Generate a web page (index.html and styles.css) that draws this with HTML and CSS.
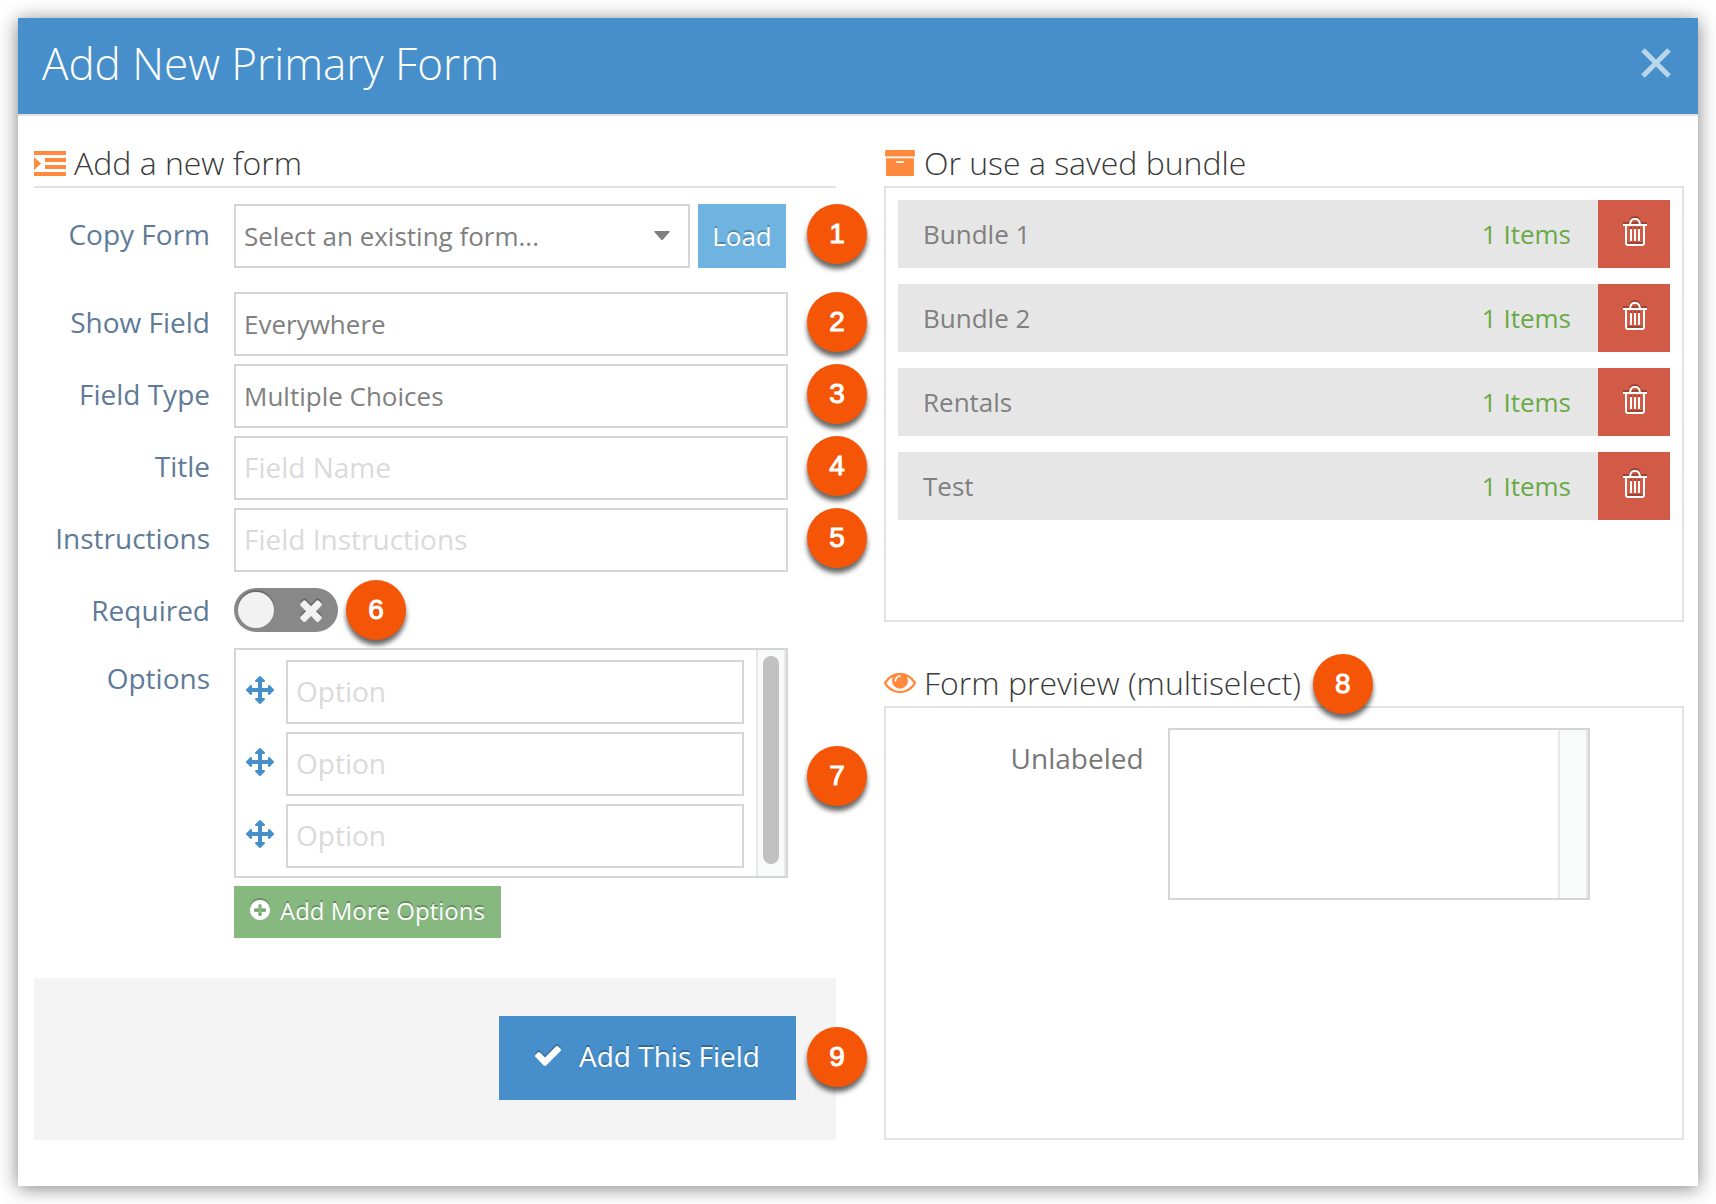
FILE: index.html
```html
<!DOCTYPE html>
<html lang="en">
<head>
	<meta charset="UTF-8">
	<title>Add New Primary Form</title>
	<link rel="stylesheet" href="styles.css">
</head>
<body>

	<!-- shared icons -->
	<svg class="sprite" aria-hidden="true">
		<symbol id="icon-move" viewBox="0 0 1792 1792">
			<path d="M1792 896q0 26-19 45l-256 256q-19 19-45 19t-45-19-19-45v-128h-384v384h128q26 0 45 19t19 45-19 45l-256 256q-19 19-45 19t-45-19l-256-256q-19-19-19-45t19-45 45-19h128v-384h-384v128q0 26-19 45t-45 19-45-19l-256-256q-19-19-19-45t19-45l256-256q19-19 45-19t45 19 19 45v128h384v-384h-128q-26 0-45-19t-19-45 19-45l256-256q19-19 45-19t45 19l256 256q19 19 19 45t-19 45-45 19h-128v384h384v-128q0-26 19-45t45-19 45 19l256 256q19 19 19 45z"/>
		</symbol>
		<symbol id="icon-trash" viewBox="0 0 26 30">
			<path fill="none" stroke="currentColor" stroke-width="2" d="M1 8h24M8 7l1-3q1-2 3-2h2q2 0 3 2l1 3M4 8v18q0 2 2 2h14q2 0 2-2V8M9 12v12M13 12v12M17 12v12"/>
		</symbol>
	</svg>

	<div class="modal" role="dialog" aria-labelledby="modal_title">
		<header class="modal-header">
			<h1 class="modal-title" id="modal_title">Add New Primary Form</h1>
			<button type="button" class="close" aria-label="Close">
				<svg viewBox="0 0 30 30"><path fill="none" stroke="currentColor" stroke-width="5" d="M2 2l26 26M28 2L2 28"/></svg>
			</button>
		</header>

		<div class="modal-body">

			<!-- new form -->
			<form class="new-form" action="">
				<h2 class="heading heading-line">
					<svg class="heading-icon" viewBox="0 0 32 26"><path d="M0 1h32v4H0zM11 8h21v4H11zM11 15h21v4H11zM0 22h32v4H0zM0 7l7 6.500l-7 6.500z"/></svg>
					<span>Add a new form</span>
				</h2>

				<div class="row row-copy">
					<label for="copy_form">Copy Form</label>
					<div class="field">
						<div class="select-wrap">
							<select id="copy_form" class="control">
								<option>Select an existing form...</option>
							</select>
							<svg class="caret" viewBox="0 0 16 10"><path d="M1 0h14q1 0 .7 1L9 8.500q-1 1-2 0L.3 1Q0 0 1 0z"/></svg>
						</div>
						<button type="button" class="btn btn-load">Load</button>
					</div>
					<span class="badge">1</span>
				</div>
				<div class="row">
					<label for="show_field">Show Field</label>
					<div class="field">
						<select id="show_field" class="control">
							<option>Everywhere</option>
						</select>
					</div>
					<span class="badge">2</span>
				</div>
				<div class="row">
					<label for="field_type">Field Type</label>
					<div class="field">
						<select id="field_type" class="control">
							<option>Multiple Choices</option>
						</select>
					</div>
					<span class="badge">3</span>
				</div>
				<div class="row">
					<label for="field_title">Title</label>
					<div class="field">
						<input type="text" id="field_title" class="control" placeholder="Field Name">
					</div>
					<span class="badge">4</span>
				</div>
				<div class="row">
					<label for="instructions">Instructions</label>
					<div class="field">
						<input type="text" id="instructions" class="control" placeholder="Field Instructions">
					</div>
					<span class="badge">5</span>
				</div>
				<div class="row row-required">
					<label for="required">Required</label>
					<div class="field">
						<span class="toggle">
							<input type="checkbox" id="required">
							<span class="knob"></span>
							<svg class="toggle-off" viewBox="300 236 1192 1320"><path d="M1490 1322q0 40-28 68l-136 136q-28 28-68 28t-68-28l-294-294-294 294q-28 28-68 28t-68-28l-136-136q-28-28-28-68t28-68l294-294-294-294q-28-28-28-68t28-68l136-136q28-28 68-28t68 28l294 294 294-294q28-28 68-28t68 28l136 136q28 28 28 68t-28 68l-294 294 294 294q28 28 28 68z"/></svg>
						</span>
						<span class="badge badge-inline">6</span>
					</div>
				</div>
				<div class="row row-options">
					<label for="option_1">Options</label>
					<div class="field">
						<div class="options">
							<ul class="option-list">
								<li>
									<svg class="move"><use href="#icon-move"/></svg>
									<input type="text" id="option_1" class="control" placeholder="Option">
								</li>
								<li>
									<svg class="move"><use href="#icon-move"/></svg>
									<input type="text" class="control" placeholder="Option" aria-label="Option 2">
								</li>
								<li>
									<svg class="move"><use href="#icon-move"/></svg>
									<input type="text" class="control" placeholder="Option" aria-label="Option 3">
								</li>
							</ul>
							<div class="track"><div class="thumb"></div></div>
						</div>
						<button type="button" class="btn btn-more">
							<svg viewBox="128 128 1536 1536"><path d="M1344 960v-128q0-26-19-45t-45-19h-256v-256q0-26-19-45t-45-19h-128q-26 0-45 19t-19 45v256h-256q-26 0-45 19t-19 45v128q0 26 19 45t45 19h256v256q0 26 19 45t45 19h128q26 0 45-19t19-45v-256h256q26 0 45-19t19-45zm320-64q0 209-103 385.500t-279.500 279.500-385.500 103-385.500-103-279.500-279.500-103-385.500 103-385.500 279.500-279.500 385.500-103 385.500 103 279.500 279.500 103 385.500z"/></svg>
							Add More Options
						</button>
					</div>
					<span class="badge">7</span>
				</div>

				<div class="actions">
					<button type="button" class="btn btn-add">
						<svg viewBox="121 344 1550 1178"><path d="M1671 566q0 40-28 68l-724 724-136 136q-28 28-68 28t-68-28l-136-136-362-362q-28-28-28-68t28-68l136-136q28-28 68-28t68 28l294 295 656-657q28-28 68-28t68 28l136 136q28 28 28 68z"/></svg>
						Add This Field
					</button>
					<span class="badge">9</span>
				</div>
			</form>

			<div class="side">
				<!-- saved bundles -->
				<section class="bundles">
					<h2 class="heading">
						<svg class="heading-icon" viewBox="0 0 32 28"><path d="M0 0h32v7H0zM1 9h30v19H1zM12 12v2h8v-2z" fill-rule="evenodd"/></svg>
						<span>Or use a saved bundle</span>
					</h2>
					<ul class="panel bundle-list">
						<li>
							<span class="bundle-name">Bundle 1</span>
							<span class="bundle-count">1 Items</span>
							<button type="button" class="btn-delete" aria-label="Delete Bundle 1"><svg><use href="#icon-trash"/></svg></button>
						</li>
						<li>
							<span class="bundle-name">Bundle 2</span>
							<span class="bundle-count">1 Items</span>
							<button type="button" class="btn-delete" aria-label="Delete Bundle 2"><svg><use href="#icon-trash"/></svg></button>
						</li>
						<li>
							<span class="bundle-name">Rentals</span>
							<span class="bundle-count">1 Items</span>
							<button type="button" class="btn-delete" aria-label="Delete Rentals"><svg><use href="#icon-trash"/></svg></button>
						</li>
						<li>
							<span class="bundle-name">Test</span>
							<span class="bundle-count">1 Items</span>
							<button type="button" class="btn-delete" aria-label="Delete Test"><svg><use href="#icon-trash"/></svg></button>
						</li>
					</ul>
				</section>

				<!-- preview -->
				<section class="preview">
					<h2 class="heading">
						<svg class="heading-icon" viewBox="0 256 1792 1408"><path d="M1664 960q-152-236-381-353 61 104 61 225 0 185-131.500 316.500t-316.500 131.500-316.500-131.500-131.500-316.500q0-121 61-225-229 117-381 353 133 205 333.500 326.500t434.500 121.500 434.500-121.500 333.500-326.500zm-720-384q0-20-14-34t-34-14q-125 0-214.500 89.500t-89.500 214.500q0 20 14 34t34 14 34-14 14-34q0-86 61-147t147-61q20 0 34-14t14-34zm848 384q0 34-20 69-140 230-376.500 368.500t-499.500 138.500-499.500-139-376.500-368q-20-35-20-69t20-69q140-229 376.500-368t499.500-139 499.500 139 376.500 368q20 35 20 69z"/></svg>
						<span class="heading-text">Form preview (multiselect)<span class="badge badge-heading">8</span></span>
					</h2>
					<div class="panel preview-panel">
						<label for="preview">Unlabeled</label>
						<div class="preview-box">
							<select id="preview" multiple></select>
							<div class="track"></div>
						</div>
					</div>
				</section>
			</div>

		</div>
	</div>

</body>
</html>
```
FILE: styles.css
```css
*{
	box-sizing: border-box;
}
body{
	margin: 0;
	padding: 18px;
	background-color: #fff;
	font-family: "Open Sans", sans-serif;
	font-size: 26px;
	color: #808080;
}
ul{
	list-style: none;
	margin: 0;
	padding: 0;
}
h1,h2{
	margin: 0;
	font-weight: 300;
}
input,select,button{
	font-family: inherit;
	font-size: inherit;
	color: inherit;
	border-radius: 0;
}
button{
	border: 0;
	cursor: pointer;
}
svg{
	display: block;
	flex: none;
	fill: currentColor;
}
.sprite{
	position: absolute;
	width: 0;
	height: 0;
}

/*modal*/
.modal{
	background-color: #fff;
	box-shadow: 0 2px 18px rgba(0,0,0,0.5);
}
.modal-header{
	display: flex;
	align-items: center;
	justify-content: space-between;
	height: 98px;
	padding: 0 27px 6px 24px;
	background-color: #478fca;
	border-bottom: 2px solid #e2e2e2;
}
.modal-title{
	font-size: 44px;
	line-height: 60px;
	color: #fff;
}
.close{
	padding: 0;
	background: none;
	color: #bad6ec;
}
.close svg{
	width: 30px;
	height: 30px;
}
.modal-body{
	display: grid;
	grid-template-columns: 802fr 800fr;
	gap: 48px;
	padding: 26px 14px 46px 16px;
}

/*headings*/
.heading{
	display: flex;
	align-items: center;
	gap: 8px;
	height: 44px;
	padding-bottom: 2px;
	font-size: 32px;
	line-height: 42px;
	color: #393939;
}
.heading-line{
	height: 46px;
	border-bottom: 2px solid #e2e2e2;
}
.heading-icon{
	width: 32px;
	height: 26px;
	color: #ff893c;
}
.heading-text{
	position: relative;
}

/*form rows*/
.new-form{
	display: flex;
	flex-direction: column;
}
.row{
	position: relative;
	display: grid;
	grid-template-columns: 176px 1fr;
	gap: 24px;
	padding-right: 48px;
	margin-bottom: 8px;
}
.row label{
	align-self: center;
	padding-bottom: 4px;
	text-align: right;
	font-size: 28px;
	line-height: 40px;
	color: #607b97;
}
.row-copy{
	margin: 16px 0 24px;
}
.row-copy .field{
	display: flex;
	gap: 8px;
	margin-right: 2px;
}
.row-required{
	margin: 8px 0 16px;
}
.row-required label{
	padding: 0;
}
.row-required .field{
	display: flex;
	align-items: center;
	gap: 8px;
	height: 44px;
}
.row-options{
	margin-bottom: 40px;
}
.row-options label{
	align-self: start;
	padding-top: 10px;
}
.control{
	display: block;
	width: 100%;
	height: 64px;
	padding: 0 8px;
	border: 2px solid #d5d5d5;
	background-color: #fff;
	font-size: 26px;
	appearance: none;
}
.control::placeholder{
	color: #dadada;
	font-size: 28px;
	opacity: 1;
}
.select-wrap{
	position: relative;
	flex: 1;
}
.caret{
	position: absolute;
	right: 20px;
	top: 27px;
	width: 16px;
	height: 10px;
	pointer-events: none;
}

/*buttons*/
.btn{
	display: flex;
	align-items: center;
	color: #fff;
	text-shadow: 0 -2px 0 rgba(0,0,0,0.25);
}
.btn svg{
	filter: drop-shadow(0 -2px 0 rgba(0,0,0,0.2));
}
.btn-load{
	justify-content: center;
	width: 88px;
	padding: 0;
	background-color: #6fb3e0;
}
.btn-more{
	gap: 10px;
	height: 52px;
	margin-top: 8px;
	padding: 0 16px 4px;
	background-color: #87b87f;
	font-size: 24px;
}
.btn-more svg{
	width: 20px;
	height: 20px;
}
.btn-add{
	gap: 18px;
	height: 84px;
	padding: 0 36px 4px;
	background-color: #478fca;
	font-size: 28px;
}
.btn-add svg{
	width: 26px;
	height: 20px;
}
.actions{
	position: relative;
	display: flex;
	align-items: center;
	justify-content: flex-end;
	padding: 38px 40px 40px;
	background-color: #f4f4f4;
}

/*toggle*/
.toggle{
	position: relative;
	display: flex;
	align-items: center;
	justify-content: space-between;
	width: 104px;
	height: 44px;
	padding: 0 16px 0 4px;
	border-radius: 22px;
	background-color: #888;
	color: #f2f2f2;
}
.toggle input{
	position: absolute;
	inset: 0;
	width: 100%;
	height: 100%;
	margin: 0;
	opacity: 0;
}
.knob{
	width: 36px;
	height: 36px;
	border-radius: 50%;
	background-color: #f2f2f2;
	box-shadow: 0 -2px 0 rgba(0,0,0,0.2);
}
.toggle-off{
	width: 22px;
	height: 24px;
	filter: drop-shadow(0 -2px 0 rgba(0,0,0,0.25));
}

/*options*/
.options{
	display: flex;
	border: 2px solid #d5d5d5;
}
.option-list{
	display: flex;
	flex: 1;
	flex-direction: column;
	gap: 8px;
	padding: 10px 12px 8px 10px;
}
.option-list li{
	display: flex;
	align-items: center;
	gap: 12px;
}
.move{
	width: 28px;
	height: 28px;
	margin-bottom: 4px;
	color: #478fca;
}
.track{
	width: 30px;
	padding: 6px 5px 12px;
	border: solid #e8e8e8;
	border-width: 0 2px;
	background-color: #f9fbfa;
}
.thumb{
	height: 100%;
	border-radius: 8px;
	background-color: #c1c1c1;
}

/*numbered markers*/
.badge{
	position: absolute;
	right: -31px;
	top: calc(50% - 32px);
	width: 60px;
	height: 60px;
	border-radius: 50%;
	background-color: #f55507;
	box-shadow: 0 5px 5px rgba(0,0,0,0.6);
	font-family: "Liberation Sans", sans-serif;
	font-size: 28px;
	line-height: 60px;
	text-align: center;
	color: #fff;
	-webkit-text-stroke: 1px #fff;
}
.row-options .badge{
	top: 98px;
}
.badge-inline{
	position: static;
}
.badge-heading{
	right: auto;
	top: -8px;
	left: calc(100% + 12px);
}

/*right column*/
.side{
	display: flex;
	flex-direction: column;
	gap: 40px;
}
.preview{
	display: flex;
	flex: 1;
	flex-direction: column;
}
.panel{
	border: 2px solid #e3e3e3;
}
.bundle-list{
	display: flex;
	flex-direction: column;
	gap: 16px;
	min-height: 436px;
	padding: 12px;
}
.bundle-list li{
	display: flex;
	align-items: center;
	height: 68px;
	padding-left: 25px;
	background-color: #e6e6e6;
}
.bundle-name{
	flex: 1;
}
.bundle-count{
	padding-right: 27px;
	color: #69aa46;
}
.btn-delete{
	display: flex;
	align-items: center;
	justify-content: center;
	width: 72px;
	height: 68px;
	padding: 0 0 4px 2px;
	background-color: #d15b47;
	color: #fff;
}
.btn-delete svg{
	width: 26px;
	height: 30px;
	filter: drop-shadow(0 -2px 0 rgba(0,0,0,0.25));
}
.preview-panel{
	display: flex;
	flex: 1;
	align-items: flex-start;
	padding: 20px 92px 20px 0;
}
.preview-panel label{
	flex: 1;
	padding: 10px 24px 0 0;
	text-align: right;
	font-size: 28px;
	line-height: 40px;
	color: #777;
}
.preview-box{
	display: flex;
	width: 60%;
	height: 172px;
	border: 2px solid #d5d5d5;
}
.preview-box select{
	flex: 1;
	min-width: 0;
	border: 0;
	background-color: #fff;
}
```
